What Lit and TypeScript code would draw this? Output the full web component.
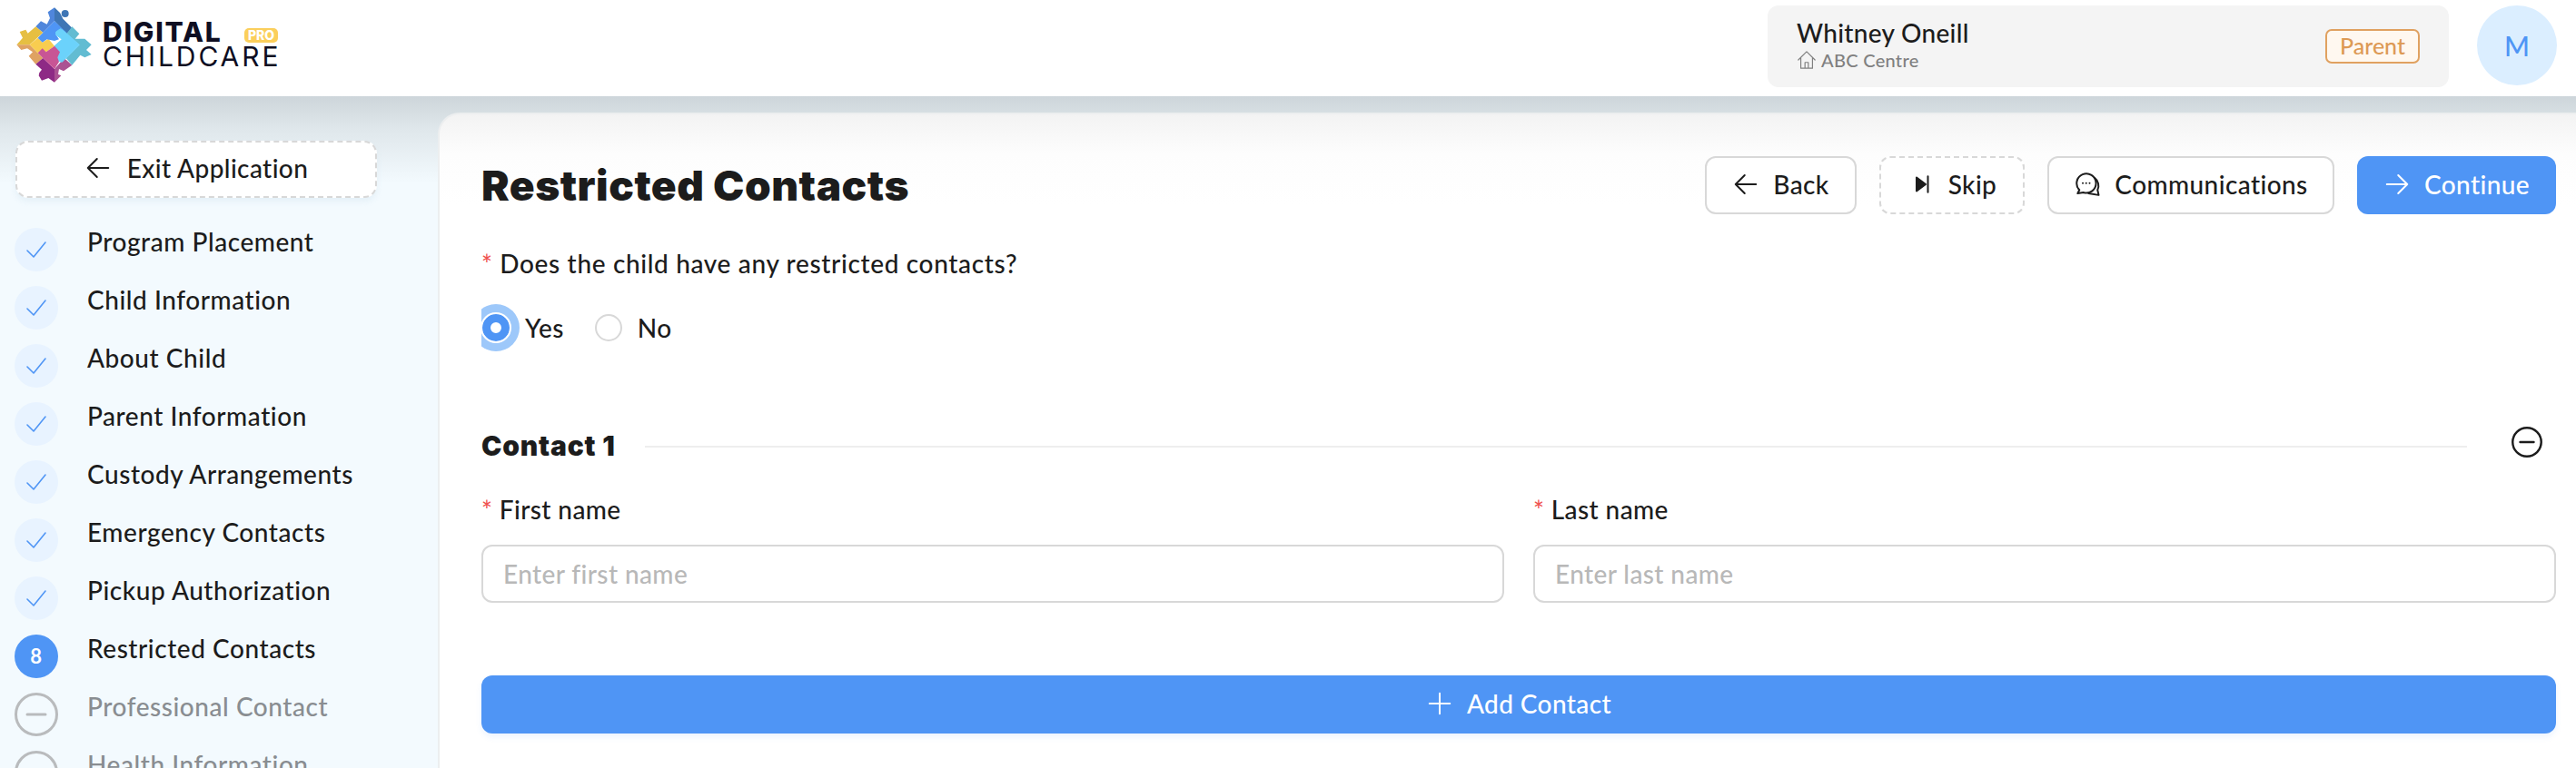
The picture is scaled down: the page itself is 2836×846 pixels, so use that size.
import { LitElement, html, css, svg } from "lit";
import { customElement } from "lit/decorators.js";

const STEPS = [
    { label: "Program Placement", state: "done" },
    { label: "Child Information", state: "done" },
    { label: "About Child", state: "done" },
    { label: "Parent Information", state: "done" },
    { label: "Custody Arrangements", state: "done" },
    { label: "Emergency Contacts", state: "done" },
    { label: "Pickup Authorization", state: "done" },
    { label: "Restricted Contacts", state: "current" },
    { label: "Professional Contact", state: "todo" },
    { label: "Health Information", state: "todo" },
];

const arrowLeft = html`<svg class="ico" viewBox="0 0 24 24"><path d="M21 12H3M11 4l-8 8 8 8" /></svg>`;
const arrowRight = html`<svg class="ico" viewBox="0 0 24 24"><path d="M3 12h18M13 4l8 8-8 8" /></svg>`;

// puzzle mark, coordinates are in 3x logo pixels
const logoMark = svg`
    <g transform="translate(30 0)" stroke-linejoin="round">
        <path fill="#3f76b5" d="M150 25L168 42L178 62L208 92L190 112L150 70Z" /><circle fill="#3f76b5" cx="185" cy="45" r="12" />
        <path fill="#4f86dc" d="M88 88L105 70L125 80L135 60L128 40L150 25V70L112 108Z" />
        <path fill="#e6bf42" d="M25 148L45 125L35 105L55 98L62 110L88 88L112 108L68 148Z" />
        <path fill="#dfa262" d="M25 148H68L112 192L88 212L65 185L78 172L60 160L40 165Z" />
        <path fill="#8e2a85" d="M88 212L112 192L150 228V272L130 258L108 266L98 250L100 240L108 230Z" />
        <path fill="#ab5393" d="M150 228L182 192L208 215L180 235L165 228L162 245L172 250L150 272Z" />
        <path fill="#62bcd2" d="M190 112L208 88L232 112L218 128L238 128L250 128L272 148L255 165L272 180L250 190L235 182L208 215L188 192L232 148Z" />
        <path fill="#f8cd50" d="M68 148L95 125L110 140L130 128L150 152L122 172L110 165L95 175Z" />
        <path fill="#4f95f5" d="M95 125L150 70L190 108L165 100L155 115L165 130L150 135L125 130L110 140Z" />
        <path fill="#6bd2fb" stroke="#6bd2fb" stroke-width="3" d="M155 105L170 95L178 100L232 148L175 205L160 200L160 170L150 152L175 130L155 115Z" />
        <path fill="#c85595" d="M95 175L110 160L122 172L150 152L168 172L160 190L165 205L150 228L112 192Z" />
    </g>
`;

@customElement("app-root")
export class AppRoot extends LitElement {
    static styles = css`
        :host {
            display: block;
            height: 846px;
            overflow: hidden;
            font-family: "Lato", sans-serif;
            font-weight: 500;
            color: #1c1c1c;
            background: #f3fafe;
        }
        .ico {
            fill: none;
            stroke: currentColor;
            stroke-width: 1.6;
            stroke-linecap: round;
            stroke-linejoin: round;
            width: 30px;
            height: 30px;
            flex: none;
        }
        .header {
            height: 106px;
            background: #fff;
            display: flex;
            align-items: flex-start;
            box-sizing: border-box;
            padding: 6px 21px 0 0;
        }
        .logo {
            display: flex;
            align-items: flex-start;
            flex: 1;
        }
        .logo svg {
            width: 113px;
            height: 100px;
        }
        .wordmark {
            position: relative;
            width: 193px;
            padding-top: 16px;
            color: #0e0e22;
            font-family: "Inter", sans-serif;
            font-size: 30px;
            line-height: 27px;
            white-space: nowrap;
        }
        .wordmark b {
            display: block;
            font-weight: 800;
            letter-spacing: 1.8px;
        }
        .wordmark span {
            display: block;
            font-weight: 400;
            letter-spacing: 2.9px;
        }
        .pro {
            position: absolute;
            right: 0;
            top: 25px;
            width: 37px;
            text-align: center;
            background: #fbcf5c;
            color: #fff;
            font-size: 14px;
            font-weight: 800;
            line-height: 16px;
            border-radius: 5px;
        }
        .user {
            width: 750px;
            height: 90px;
            box-sizing: border-box;
            background: #f4f4f4;
            border-radius: 12px;
            padding: 0 32px;
            display: flex;
            align-items: center;
            justify-content: space-between;
        }
        .name {
            font-size: 28px;
            line-height: 34px;
            letter-spacing: 0.3px;
            margin-top: -4px;
        }
        .centre {
            display: flex;
            align-items: center;
            gap: 5px;
            font-size: 20px;
            line-height: 26px;
            color: #808080;
            letter-spacing: 0.3px;
        }
        .centre .ico {
            width: 22px;
            height: 22px;
            stroke-width: 1.3;
        }
        .badge {
            width: 104px;
            height: 38px;
            box-sizing: border-box;
            padding-bottom: 2px;
            border: 2px solid #e0a160;
            border-radius: 7px;
            background: #fff8f0;
            color: #dd9a55;
            font-size: 25px;
            display: flex;
            align-items: center;
            justify-content: center;
        }
        .avatar {
            width: 88px;
            height: 88px;
            margin-left: 31px;
            border-radius: 50%;
            background: #dbeeff;
            color: #4f95f5;
            font-size: 30px;
            display: flex;
            align-items: center;
            justify-content: center;
        }
        .body {
            display: flex;
            height: 740px;
            background: linear-gradient(#cdd5da 0, #dfe7eb 36px, #f3fafe 96px);
        }
        .sidebar {
            width: 482px;
            flex: none;
            box-sizing: border-box;
            padding: 49px 67px 0 16px;
        }
        .exit {
            display: flex;
            align-items: center;
            justify-content: center;
            gap: 17px;
            height: 63px;
            margin-left: 1px;
            box-sizing: border-box;
            padding-bottom: 3px;
            border: 2px dashed #d8d8d8;
            border-radius: 14px;
            background: #fff;
            font-size: 28px;
            letter-spacing: 0.4px;
            box-shadow: 0 4px 6px rgba(220, 235, 245, 0.6);
        }
        .steps {
            display: flex;
            flex-direction: column;
            gap: 16px;
            margin-top: 33px;
        }
        .step {
            display: flex;
            gap: 32px;
            font-size: 28px;
            line-height: 32px;
            letter-spacing: 0.55px;
            white-space: nowrap;
        }
        .step-label {
            margin-top: -1px;
        }
        .bubble {
            width: 48px;
            height: 48px;
            flex: none;
            box-sizing: border-box;
            border-radius: 50%;
            display: flex;
            align-items: center;
            justify-content: center;
        }
        .bubble .ico {
            width: 24px;
            height: 24px;
        }
        .done .bubble {
            background: #e8f3ff;
            color: #4f95f5;
        }
        .current .bubble {
            background: #4f95f5;
            color: #fff;
            font-weight: 700;
            font-size: 22px;
        }
        .todo .bubble {
            border: 3px solid #b9bbbd;
            color: #b9bbbd;
        }
        .todo {
            color: #898d91;
        }
        .main {
            flex: 1;
            min-width: 0;
            margin-top: 18px;
            box-sizing: border-box;
            padding: 48px 22px 0 46px;
            border-left: 2px solid #eceeef;
            border-top: 2px solid #eceeef;
            border-top-left-radius: 24px;
            background: linear-gradient(#f3f3f3 0, #fdfdfd 44px, #fff 100px);
        }
        .top {
            display: flex;
            align-items: center;
            justify-content: space-between;
            height: 64px;
            margin-top: -2px;
        }
        h1 {
            margin: 0;
            font-family: "Inter", sans-serif;
            font-size: 46px;
            font-weight: 900;
            letter-spacing: 0.5px;
        }
        .actions {
            display: flex;
            gap: 25px;
        }
        .btn {
            height: 64px;
            box-sizing: border-box;
            padding-bottom: 2px;
            border: 2px solid #d8d8d8;
            border-radius: 12px;
            background: #fff;
            display: flex;
            align-items: center;
            justify-content: center;
            gap: 15px;
            font-size: 28px;
            letter-spacing: 0.4px;
            color: #1c1c1c;
        }
        .back {
            width: 167px;
        }
        .skip {
            width: 160px;
            border-style: dashed;
        }
        .comms {
            width: 316px;
        }
        .continue {
            width: 219px;
        }
        .primary {
            border: none;
            background: #4f95f5;
            color: #fff;
        }
        .req {
            color: #ef5350;
        }
        .label {
            font-size: 28px;
            line-height: 32px;
            letter-spacing: 0.4px;
        }
        .question {
            margin-top: 38px;
            letter-spacing: 0.65px;
        }
        .radios {
            display: flex;
            align-items: center;
            height: 56px;
            margin-top: 27px;
            overflow: hidden;
            font-size: 28px;
            letter-spacing: 0.4px;
        }
        .radio {
            width: 30px;
            height: 30px;
            flex: none;
            box-sizing: border-box;
            border-radius: 50%;
            border: 2px solid #d8d8d8;
            background: #fff;
        }
        .radio.on {
            margin: 0 17px 0 1px;
            border: 9px solid #4f95f5;
            outline: 2px solid #fff;
            box-shadow: 0 0 0 11px #9dc8fa;
        }
        .radio.off {
            margin: 0 17px 0 34px;
        }
        .contact-head {
            display: flex;
            align-items: center;
            gap: 32px;
            height: 40px;
            margin-top: 81px;
        }
        .contact-head h2 {
            margin: 0;
            padding-top: 2px;
            font-family: "Inter", sans-serif;
            font-size: 30px;
            font-weight: 900;
            letter-spacing: 0.8px;
        }
        .rule {
            flex: 1;
            height: 2px;
            margin-top: 4px;
            background: #eeeeee;
        }
        .remove {
            width: 36px;
            height: 36px;
            margin: -6px 14px 0 16px;
            color: #1c1c1c;
        }
        .fields {
            display: grid;
            grid-template-columns: 1fr 1fr;
            column-gap: 32px;
            margin-top: 35px;
        }
        input {
            display: block;
            width: 100%;
            height: 64px;
            margin-top: 23px;
            box-sizing: border-box;
            border: 2px solid #d8d8d8;
            border-radius: 12px;
            padding: 0 22px;
            font: inherit;
            font-size: 28px;
            letter-spacing: 0.4px;
            outline: none;
            background: #fff;
        }
        input::placeholder {
            color: #b8b8b8;
        }
        .add {
            margin-top: 80px;
            box-shadow: 0 4px 6px rgba(79, 149, 245, 0.1);
        }
    `;

    renderBubble(state: string, index: number) {
        if (state == "done") {
            return html`<svg class="ico" viewBox="0 0 24 24"><path d="M2 13l7 7L22 4" /></svg>`;
        }
        if (state == "current") return html`${index + 1}`;
        return html`<svg class="ico" viewBox="0 0 24 24"><path d="M2 12h20" stroke-width="3" /></svg>`;
    }

    render() {
        return html`
            <div class="header">
                <div class="logo">
                    <svg viewBox="0 18 339 300">${logoMark}</svg>
                    <div class="wordmark">
                        <b>DIGITAL</b>
                        <span>CHILDCARE</span>
                        <div class="pro">PRO</div>
                    </div>
                </div>
                <div class="user">
                    <div>
                        <div class="name">Whitney Oneill</div>
                        <div class="centre">
                            <svg class="ico" viewBox="0 0 24 24"><path d="M2 12L12 2l10 10M5 10v12h14V10M10 22v-7h4v7" /></svg>
                            ABC Centre
                        </div>
                    </div>
                    <div class="badge">Parent</div>
                </div>
                <div class="avatar">M</div>
            </div>
            <div class="body">
                <div class="sidebar">
                    <div class="exit">${arrowLeft} Exit Application</div>
                    <div class="steps">
                        ${STEPS.map(
                            (s, i) => html`
                                <div class="step ${s.state}">
                                    <div class="bubble">${this.renderBubble(s.state, i)}</div>
                                    <div class="step-label">${s.label}</div>
                                </div>
                            `,
                        )}
                    </div>
                </div>
                <div class="main">
                    <div class="top">
                        <h1>Restricted Contacts</h1>
                        <div class="actions">
                            <div class="btn back">${arrowLeft} Back</div>
                            <div class="btn skip">
                                <svg class="ico" viewBox="0 0 24 24"><path d="M8 6l8 6-8 6zM18 5v14" fill="currentColor" /></svg>
                                Skip
                            </div>
                            <div class="btn comms">
                                <svg class="ico" viewBox="0 0 24 24">
                                    <path d="M5 17A8.5 8.5 0 1 1 8.5 19.2L3.5 20Z" />
                                    <path d="M18.5 6.5A8.5 8.5 0 0 1 21 17L22 21.5L13 20" />
                                    <path d="M8 11h.01M11 11h.01M14 11h.01" />
                                </svg>
                                Communications
                            </div>
                            <div class="btn primary continue">${arrowRight} Continue</div>
                        </div>
                    </div>
                    <div class="label question"><span class="req">*</span> Does the child have any restricted contacts?</div>
                    <div class="radios">
                        <div class="radio on"></div>
                        <span>Yes</span>
                        <div class="radio off"></div>
                        <span>No</span>
                    </div>
                    <div class="contact-head">
                        <h2>Contact 1</h2>
                        <div class="rule"></div>
                        <svg class="ico remove" viewBox="0 0 24 24"><circle cx="12" cy="12" r="10.5" /><path d="M7 12h10" /></svg>
                    </div>
                    <div class="fields">
                        <div>
                            <div class="label"><span class="req">*</span> First name</div>
                            <input placeholder="Enter first name" />
                        </div>
                        <div>
                            <div class="label"><span class="req">*</span> Last name</div>
                            <input placeholder="Enter last name" />
                        </div>
                    </div>
                    <div class="btn primary add">
                        <svg class="ico" viewBox="0 0 24 24"><path d="M12 3v18M3 12h18" /></svg>
                        Add Contact
                    </div>
                </div>
            </div>
        `;
    }
}
